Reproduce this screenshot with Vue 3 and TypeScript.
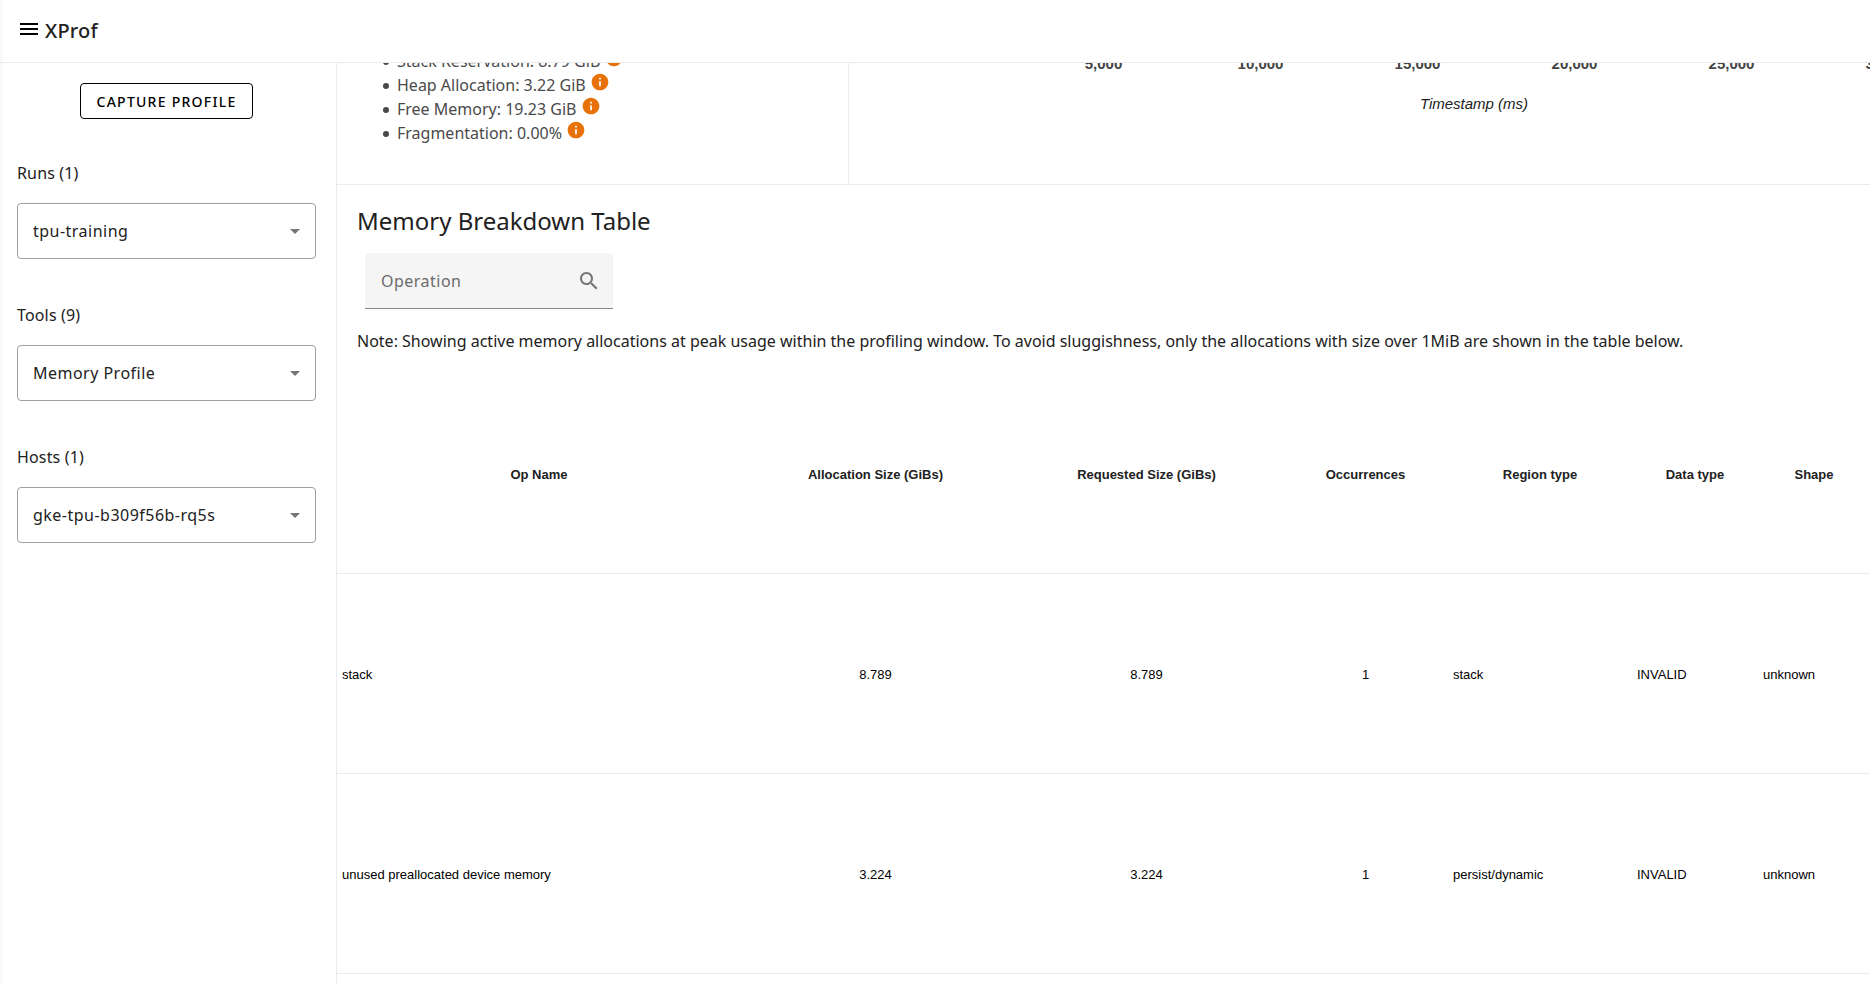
<script setup lang="ts">
import { ref } from 'vue'

interface Picker {
  id: string
  label: string
  value: string
}

interface Allocation {
  op: string
  allocated: string
  requested: string
  occurrences: number
  region: string
  dataType: string
  shape: string
}

const pickers = ref<Picker[]>([
  { id: 'runs', label: 'Runs (1)', value: 'tpu-training' },
  { id: 'tools', label: 'Tools (9)', value: 'Memory Profile' },
  { id: 'hosts', label: 'Hosts (1)', value: 'gke-tpu-b309f56b-rq5s' },
])

const stats: string[] = [
  'Stack Reservation: 8.79 GiB',
  'Heap Allocation: 3.22 GiB',
  'Free Memory: 19.23 GiB',
  'Fragmentation: 0.00%',
]

const ticks: string[] = ['5,000', '10,000', '15,000', '20,000', '25,000', '30,000']

const columns: string[] = [
  'Op Name',
  'Allocation Size (GiBs)',
  'Requested Size (GiBs)',
  'Occurrences',
  'Region type',
  'Data type',
  'Shape',
]

const rows: Allocation[] = [
  { op: 'stack', allocated: '8.789', requested: '8.789', occurrences: 1, region: 'stack', dataType: 'INVALID', shape: 'unknown' },
  { op: 'unused preallocated device memory', allocated: '3.224', requested: '3.224', occurrences: 1, region: 'persist/dynamic', dataType: 'INVALID', shape: 'unknown' },
]

const operation = ref('')
</script>

<template>
  <div class="page">
    <header class="topbar">
      <button class="menu" type="button" aria-label="Toggle menu">
        <svg viewBox="0 0 24 24" width="24" height="24"><path d="M3 18h18v-2H3v2zm0-5h18v-2H3v2zm0-7v2h18V6H3z" /></svg>
      </button>
      <span class="brand">XProf</span>
    </header>

    <div class="body">
      <nav class="sidebar">
        <button class="capture" type="button">CAPTURE PROFILE</button>
        <div v-for="p in pickers" :key="p.id" class="picker">
          <label :for="p.id">{{ p.label }}</label>
          <div class="select">
            <select :id="p.id" v-model="p.value">
              <option :value="p.value">{{ p.value }}</option>
            </select>
            <svg class="arrow" viewBox="0 0 10 5" width="10" height="5"><path d="M0 0h10L5 5z" /></svg>
          </div>
        </div>
      </nav>

      <main class="main">
        <section class="overview">
          <ul class="stats">
            <li v-for="s in stats" :key="s">
              {{ s }}
              <svg class="info" viewBox="0 0 24 24" width="20" height="20"><path d="M12 2C6.480 2 2 6.480 2 12s4.480 10 10 10 10-4.480 10-10S17.520 2 12 2zm1 15h-2v-6h2v6zm0-8h-2V7h2v2z" /></svg>
            </li>
          </ul>
          <div class="chart">
            <div class="axis">
              <span v-for="t in ticks" :key="t">{{ t }}</span>
            </div>
            <div class="axis-title">Timestamp (ms)</div>
          </div>
        </section>

        <section class="breakdown">
          <h2>Memory Breakdown Table</h2>
          <div class="search">
            <input v-model="operation" type="text" placeholder="Operation" aria-label="Operation" />
            <svg viewBox="0 0 24 24" width="24" height="24"><path d="M15.500 14h-.79l-.28-.27C15.410 12.590 16 11.110 16 9.500 16 5.910 13.090 3 9.500 3S3 5.910 3 9.500 5.910 16 9.500 16c1.610 0 3.090-.59 4.230-1.570l.27.28v.79l5 4.990L20.490 19l-4.990-5zm-6 0C7.010 14 5 11.990 5 9.500S7.010 5 9.500 5 14 7.010 14 9.500 11.990 14 9.500 14z" /></svg>
          </div>
          <p>
            Note: Showing active memory allocations at peak usage within the profiling window. To avoid sluggishness, only the
            allocations with size over 1MiB are shown in the table below.
          </p>
        </section>

        <table>
          <colgroup>
            <col class="c-op" />
            <col class="c-alloc" />
            <col class="c-req" />
            <col class="c-occ" />
            <col class="c-region" />
            <col class="c-data" />
            <col class="c-shape" />
          </colgroup>
          <thead>
            <tr>
              <th v-for="c in columns" :key="c" scope="col">{{ c }}</th>
            </tr>
          </thead>
          <tbody>
            <tr v-for="r in rows" :key="r.op">
              <td>{{ r.op }}</td>
              <td class="num">{{ r.allocated }}</td>
              <td class="num">{{ r.requested }}</td>
              <td class="num">{{ r.occurrences }}</td>
              <td>{{ r.region }}</td>
              <td>{{ r.dataType }}</td>
              <td>{{ r.shape }}</td>
            </tr>
          </tbody>
        </table>
      </main>
    </div>
  </div>
</template>

<style>
body {
  margin: 0;
  background: #fff;
}
</style>

<style scoped>
.page {
  display: flex;
  flex-direction: column;
  height: 100vh;
  overflow: hidden;
  background: linear-gradient(to right, #f6f6f6, #fff 4px);
  color: #212121;
  font-family: 'Noto Sans', sans-serif;
  font-size: 16px;
  line-height: 24px;
}

.page * {
  box-sizing: border-box;
}

.topbar {
  display: flex;
  align-items: center;
  gap: 4px;
  flex: none;
  height: 63px;
  padding: 0 17px;
  border-bottom: 1px solid #ebebeb;
}

.menu {
  display: flex;
  padding: 0 0 4px;
  border: 0;
  background: none;
  cursor: pointer;
}

.brand {
  font-size: 20px;
  font-weight: 500;
  letter-spacing: 0.01em;
}

.body {
  display: flex;
  flex: 1;
  min-height: 0;
}

.sidebar {
  display: flex;
  flex-direction: column;
  gap: 36px;
  flex: none;
  width: 337px;
  padding: 20px 20px 0 17px;
  border-right: 1px solid #ebebeb;
}

.capture {
  align-self: center;
  height: 36px;
  padding: 0 16px;
  border: 1px solid #000;
  border-radius: 4px;
  background: #fff;
  color: #000;
  font: 500 14px 'Noto Sans', sans-serif;
  letter-spacing: 0.09em;
  cursor: pointer;
}

.picker {
  display: flex;
  flex-direction: column;
  gap: 18px;
}

.picker label {
  padding-top: 6px;
  letter-spacing: 0.01em;
}

.picker + .picker label {
  padding-top: 8px;
}

.select {
  display: grid;
  align-items: center;
}

.select > * {
  grid-area: 1 / 1;
}

.select select {
  width: 100%;
  height: 56px;
  padding: 0 32px 0 15px;
  border: 1px solid #9e9e9e;
  border-radius: 4px;
  appearance: none;
  background: transparent;
  color: #212121;
  font: 16px 'Noto Sans', sans-serif;
  letter-spacing: 0.03em;
}

.arrow {
  justify-self: end;
  margin-right: 16px;
  fill: #757575;
  pointer-events: none;
}

.main {
  flex: 1;
  min-width: 0;
  overflow: hidden;
}

/* The overview is scrolled part way under the top bar. */
.overview {
  display: grid;
  grid-template-columns: 1fr 2fr;
  margin-top: -14px;
  border-bottom: 1px solid #ebebeb;
}

.stats {
  margin: 0;
  padding: 0 0 39px 46px;
  color: #4a4a4a;
  list-style: none;
}

.stats li {
  height: 24px;
}

.stats li::before {
  content: '';
  display: inline-block;
  width: 6px;
  height: 6px;
  margin-right: 8px;
  border-radius: 50%;
  background: currentColor;
  vertical-align: 2px;
}

.info {
  margin-top: -4px;
  fill: #e8710a;
  vertical-align: -1px;
}

.chart {
  min-width: 0;
  padding-top: 5px;
  overflow: hidden;
  border-left: 1px solid #ebebeb;
  font-family: 'Liberation Sans', Arial, sans-serif;
  font-size: 15px;
  line-height: 20px;
}

.axis {
  display: flex;
  padding-left: 176px;
  color: #444;
  font-weight: 700;
}

.axis span {
  flex: none;
  width: 157px;
  text-align: center;
}

.axis-title {
  width: 1250px;
  padding-top: 20px;
  font-style: italic;
  text-align: center;
}

.breakdown {
  padding: 20px 20px 0;
}

.breakdown h2 {
  margin: 0;
  font-size: 24px;
  font-weight: 400;
  line-height: 32px;
}

.search {
  display: flex;
  align-items: center;
  width: 248px;
  height: 56px;
  margin: 16px 8px 20px;
  padding: 0 12px 0 16px;
  border-bottom: 1px solid #8a8a8a;
  border-radius: 4px 4px 0 0;
  background: #f5f5f5;
}

.search input {
  flex: 1;
  min-width: 0;
  padding: 0;
  border: 0;
  outline: 0;
  background: none;
  color: #212121;
  font: 16px 'Noto Sans', sans-serif;
  letter-spacing: 0.03em;
}

.search input::placeholder {
  color: #6b6b6b;
  opacity: 1;
}

.search svg {
  flex: none;
  fill: #757575;
}

.breakdown p {
  margin: 0 0 20px;
}

table {
  width: 100%;
  border-collapse: collapse;
  table-layout: fixed;
  font-family: 'Liberation Sans', Arial, sans-serif;
  font-size: 13px;
  line-height: 16px;
}

th,
td {
  height: 200px;
  padding: 4px 5px 0;
  border-bottom: 1px solid #ebebeb;
  text-align: left;
  white-space: nowrap;
}

th {
  text-align: center;
}

td {
  color: #000;
}

.num {
  text-align: center;
}

.c-op {
  width: 404px;
}

.c-alloc {
  width: 269px;
}

.c-req {
  width: 273px;
}

.c-occ {
  width: 165px;
}

.c-region {
  width: 184px;
}

.c-data {
  width: 126px;
}
</style>
